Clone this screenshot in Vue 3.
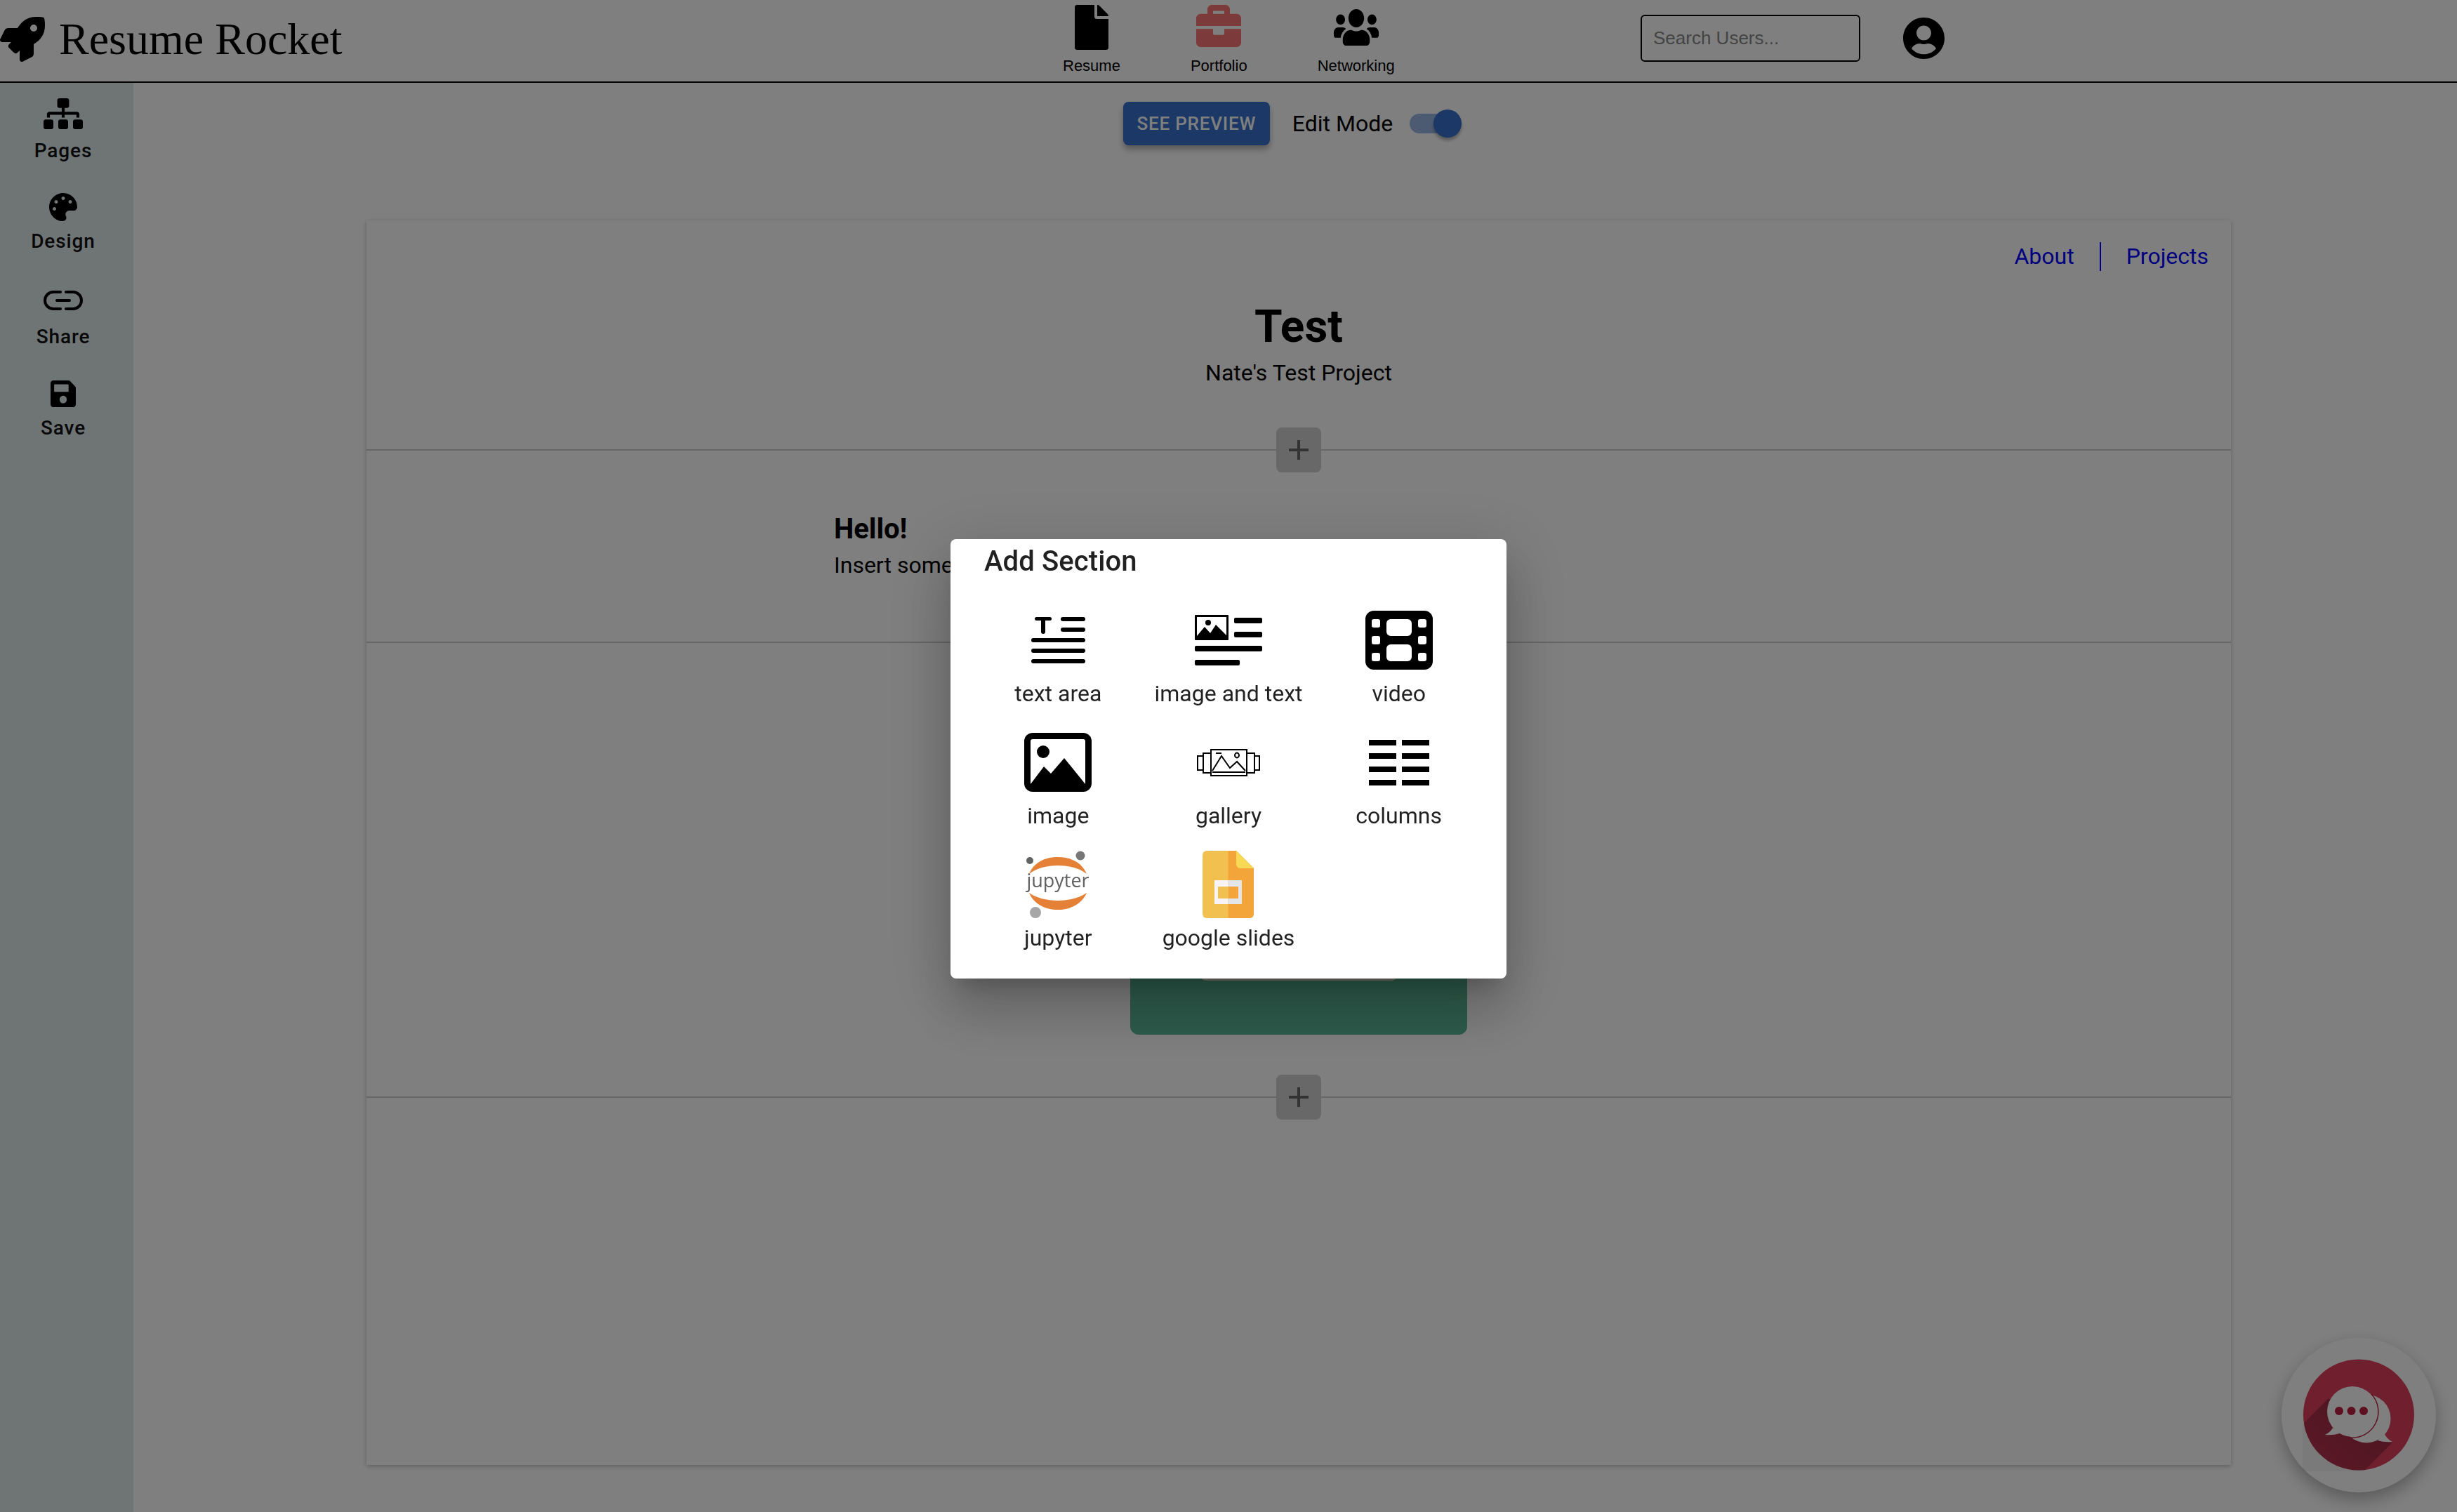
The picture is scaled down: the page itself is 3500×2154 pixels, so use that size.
<template>
  <div class="page">
    <header class="topbar">
      <div class="brand">
        <svg class="rocket" width="64" height="64" viewBox="0 0 512 512" aria-hidden="true">
          <path d="M505.05 19.1a15.89 15.89 0 0 0-12.2-12.2C460.65 0 435.46 0 410.36 0c-103.2 0-165.1 55.2-211.29 128H94.87A48 48 0 0 0 52 154.49l-49.42 98.8A24 24 0 0 0 24.07 288h103.77l-22.47 22.47a32 32 0 0 0 0 45.25l50.9 50.91a32 32 0 0 0 45.26 0L224 384.16V488a24 24 0 0 0 34.7 21.49l98.7-49.39a47.91 47.91 0 0 0 26.5-42.9V312.79c72.59-46.3 128-108.4 128-211.09.1-25.2.1-50.4-6.85-82.6zM384 168a40 40 0 1 1 40-40 40 40 0 0 1-40 40z" />
        </svg>
        <span class="brand-name">Resume Rocket</span>
      </div>
      <nav class="top-nav">
        <a class="top-link">
          <svg width="48" height="64" viewBox="0 0 384 512" aria-hidden="true">
            <path d="M224 136V0H24C10.7 0 0 10.7 0 24v464c0 13.3 10.7 24 24 24h336c13.3 0 24-10.7 24-24V160H248c-13.2 0-24-10.8-24-24zm160-14.1v6.1H256V0h6.1c6.4 0 12.5 2.5 17 7l97.9 98c4.5 4.5 7 10.6 7 16.9z" />
          </svg>
          <span>Resume</span>
        </a>
        <a class="top-link">
          <svg class="case" width="64" height="60" viewBox="0 32 512 448" preserveAspectRatio="none" aria-hidden="true">
            <path d="M320 336c0 8.84-7.16 16-16 16h-96c-8.84 0-16-7.16-16-16v-48H0v144c0 25.6 22.4 48 48 48h416c25.6 0 48-22.4 48-48V288H320v48zm144-208h-80V80c0-25.6-22.4-48-48-48H176c-25.6 0-48 22.4-48 48v48H48c-25.6 0-48 22.4-48 48v80h512v-80c0-25.6-22.4-48-48-48zm-144 0H192V96h128v32z" />
          </svg>
          <span>Portfolio</span>
        </a>
        <a class="top-link">
          <svg class="people" width="64" height="52" viewBox="0 32 640 448" preserveAspectRatio="none" aria-hidden="true">
            <path d="M96 224c35.3 0 64-28.7 64-64s-28.7-64-64-64-64 28.7-64 64 28.7 64 64 64zm448 0c35.3 0 64-28.7 64-64s-28.7-64-64-64-64 28.7-64 64 28.7 64 64 64zm32 32h-64c-17.6 0-33.5 7.1-45.1 18.6 40.3 22.1 68.9 62 75.1 109.4h66c17.7 0 32-14.3 32-32v-32c0-35.3-28.7-64-64-64zm-256 0c61.9 0 112-50.1 112-112S381.9 32 320 32 208 82.1 208 144s50.1 112 112 112zm76.8 32h-8.3c-20.8 10-43.9 16-68.5 16s-47.6-6-68.5-16h-8.3C179.6 288 128 339.6 128 403.2V432c0 26.5 21.5 48 48 48h288c26.5 0 48-21.5 48-48v-28.8c0-63.6-51.6-115.2-115.2-115.2zm-223.7-13.4C161.5 263.1 145.6 256 128 256H64c-35.3 0-64 28.7-64 64v32c0 17.7 14.3 32 32 32h65.9c6.3-47.4 34.9-87.3 75.2-109.4z" />
          </svg>
          <span>Networking</span>
        </a>
      </nav>
      <input class="search" type="text" placeholder="Search Users..." />
      <svg class="avatar" width="59" height="59" viewBox="0 8 496 496" aria-hidden="true">
        <path d="M248 8C111 8 0 119 0 256s111 248 248 248 248-111 248-248S385 8 248 8zm0 96c48.6 0 88 39.4 88 88s-39.4 88-88 88-88-39.4-88-88 39.4-88 88-88zm0 344c-58.7 0-111.3-26.6-146.5-68.2 18.8-35.4 55.6-59.8 98.5-59.8 2.4 0 4.8.4 7.1 1.1 13 4.2 26.6 6.9 40.9 6.9 14.3 0 28-2.7 40.9-6.9 2.3-.7 4.7-1.1 7.1-1.1 42.9 0 79.7 24.4 98.5 59.8C359.3 421.4 306.7 448 248 448z" />
      </svg>
    </header>

    <div class="body-row">
      <aside class="sidebar">
        <div v-for="item in sideItems" :key="item.label" class="side-item">
          <div class="side-icon">
            <svg v-if="item.label === 'Pages'" width="56" height="44" viewBox="0 0 640 512" preserveAspectRatio="none" aria-hidden="true">
              <path d="M128 352H32c-17.67 0-32 14.33-32 32v96c0 17.67 14.33 32 32 32h96c17.67 0 32-14.33 32-32v-96c0-17.67-14.33-32-32-32zm-24-80h192v48h48v-48h192v48h48v-57.59c0-21.17-17.23-38.41-38.41-38.41H344v-64h40c17.67 0 32-14.33 32-32V32c0-17.67-14.33-32-32-32H256c-17.67 0-32 14.33-32 32v96c0 17.67 14.33 32 32 32h40v64H94.41C73.23 224 56 241.23 56 262.41V320h48v-48zm264 80h-96c-17.67 0-32 14.33-32 32v96c0 17.67 14.33 32 32 32h96c17.67 0 32-14.33 32-32v-96c0-17.67-14.33-32-32-32zm240 0h-96c-17.67 0-32 14.33-32 32v96c0 17.67 14.33 32 32 32h96c17.67 0 32-14.33 32-32v-96c0-17.67-14.33-32-32-32z" />
            </svg>
            <svg v-else-if="item.label === 'Design'" width="40" height="40" viewBox="0 0 512 512" aria-hidden="true">
              <path d="M204.3 5C104.9 24.4 24.8 104.3 5.2 203.4c-37 187 131.7 326.4 258.8 306.7 41.2-6.4 61.4-54.6 42.5-91.7-23.1-45.4 9.9-98.4 60.9-98.4h79.7c35.8 0 64.8-29.6 64.9-65.3C511.5 97.1 368.1-26.9 204.3 5zM96 320c-17.7 0-32-14.3-32-32s14.3-32 32-32 32 14.3 32 32-14.3 32-32 32zm32-128c-17.7 0-32-14.3-32-32s14.3-32 32-32 32 14.3 32 32-14.3 32-32 32zm128-64c-17.7 0-32-14.3-32-32s14.3-32 32-32 32 14.3 32 32-14.3 32-32 32zm128 64c-17.7 0-32-14.3-32-32s14.3-32 32-32 32 14.3 32 32-14.3 32-32 32z" />
            </svg>
            <svg v-else-if="item.label === 'Share'" width="56" height="28" viewBox="0 0 56 28" fill="none" stroke="#000" stroke-width="4" stroke-linecap="round" aria-hidden="true">
              <path d="M24 2H14a12 12 0 0 0 0 24h10" />
              <path d="M32 2h10a12 12 0 0 1 0 24H32" />
              <path d="M19 14h18" />
            </svg>
            <svg v-else width="36" height="38" viewBox="0 32 448 448" preserveAspectRatio="none" aria-hidden="true">
              <path d="M433.941 129.941l-83.882-83.882A48 48 0 0 0 316.118 32H48C21.49 32 0 53.49 0 80v352c0 26.51 21.49 48 48 48h352c26.51 0 48-21.49 48-48V163.882a48 48 0 0 0-14.059-33.941zM224 416c-35.346 0-64-28.654-64-64 0-35.346 28.654-64 64-64s64 28.654 64 64c0 35.346-28.654 64-64 64zm96-304.52V212c0 6.627-5.373 12-12 12H76c-6.627 0-12-5.373-12-12V108c0-6.627 5.373-12 12-12h228.52c3.183 0 6.235 1.264 8.485 3.515l3.48 3.48A11.996 11.996 0 0 1 320 111.48z" />
            </svg>
          </div>
          <span class="side-label" :style="{ marginTop: item.gap + 'px' }">{{ item.label }}</span>
        </div>
      </aside>

      <main class="main">
        <div class="controls">
          <button type="button" class="preview-btn">See Preview</button>
          <span class="edit-label">Edit Mode</span>
          <div class="switch">
            <div class="switch-track"></div>
            <div class="switch-thumb"></div>
          </div>
        </div>

        <div class="card">
          <section class="section section-head">
            <div class="page-links">
              <a class="page-link">About</a>
              <a class="page-link page-link-split">Projects</a>
            </div>
            <h1 class="title">Test</h1>
            <p class="subtitle">Nate's Test Project</p>
            <button type="button" class="add-btn" aria-label="Add section"><span class="plus"></span></button>
          </section>
          <section class="section section-text">
            <h2 class="hello">Hello!</h2>
            <p class="insert">Insert some text</p>
          </section>
          <section class="section section-media">
            <div class="green-block">
              <div class="green-inner"></div>
            </div>
            <button type="button" class="add-btn" aria-label="Add section"><span class="plus"></span></button>
          </section>
          <section class="section section-empty"></section>
        </div>
      </main>
    </div>

    <div class="chat-widget">
      <svg width="220" height="220" viewBox="0 0 220 220" aria-hidden="true">
        <defs>
          <clipPath id="chat-circle"><circle cx="110" cy="109.5" r="79" /></clipPath>
          <clipPath id="chat-square"><rect x="30" y="30" width="160" height="160" /></clipPath>
          <linearGradient id="chat-shade" x1="1" y1="0" x2="0" y2="1">
            <stop offset="0" stop-color="#000" stop-opacity="0.34" />
            <stop offset="1" stop-color="#000" stop-opacity="0.08" />
          </linearGradient>
        </defs>
        <polygon points="67,86 158,149 58,249 -33,186" fill="#000" opacity="0.04" clip-path="url(#chat-square)" />
        <circle cx="110" cy="109.5" r="79" fill="#e03e5e" />
        <polygon points="67,86 158,149 58,249 -33,186" fill="url(#chat-shade)" clip-path="url(#chat-circle)" />
        <circle cx="121" cy="115" r="34.5" fill="#fff" />
        <path d="M147 137 Q150 144 158 148 Q146 149 137 146z" fill="#fff" />
        <circle cx="101" cy="105" r="36" fill="#fff" />
        <path d="M73 128 Q70 134 62 138 Q74 139 83 136z" fill="#fff" />
        <path d="M128 80A37 37 0 0 1 97 142" fill="none" stroke="#bd2040" stroke-width="1.5" />
        <circle cx="82" cy="104" r="6" fill="#bd2040" />
        <circle cx="99.5" cy="104" r="6" fill="#bd2040" />
        <circle cx="117" cy="104" r="6" fill="#bd2040" />
      </svg>
    </div>

    <div class="overlay">
      <div class="dialog">
        <h3 class="dialog-title">Add Section</h3>
        <div class="options">
          <div class="option">
            <div class="option-icon">
              <svg width="77" height="67" viewBox="0 0 77 67" aria-hidden="true">
                <rect x="5" y="0" width="24" height="5" rx="2.5" />
                <rect x="14" y="0" width="6" height="24" rx="3" />
                <rect x="42" y="0" width="35" height="6" rx="3" />
                <rect x="42" y="15" width="35" height="6" rx="3" />
                <rect x="0" y="30" width="77" height="6" rx="3" />
                <rect x="0" y="45" width="77" height="6" rx="3" />
                <rect x="0" y="60" width="77" height="6" rx="3" />
              </svg>
            </div>
            <span class="option-label">text area</span>
          </div>
          <div class="option">
            <div class="option-icon">
              <svg width="96" height="72" viewBox="0 0 96 72" aria-hidden="true">
                <rect x="0" y="0" width="48" height="36" rx="1" />
                <rect x="3" y="3" width="42" height="28" fill="#fff" />
                <circle cx="19" cy="11" r="4" />
                <path d="M3 30 14 17l8 9 8-12 15 15v3H3z" />
                <rect x="56" y="4" width="40" height="8" rx="2" />
                <rect x="56" y="24" width="40" height="8" rx="2" />
                <rect x="0" y="44" width="96" height="8" rx="2" />
                <rect x="0" y="64" width="64" height="8" rx="2" />
              </svg>
            </div>
            <span class="option-label">image and text</span>
          </div>
          <div class="option">
            <div class="option-icon">
              <svg width="96" height="84" viewBox="0 0 96 84" aria-hidden="true">
                <path fill-rule="evenodd" d="M12 0H84A12 12 0 0 1 96 12V72A12 12 0 0 1 84 84H12A12 12 0 0 1 0 72V12A12 12 0 0 1 12 0zM12 12a3 3 0 0 0-3 3v6a3 3 0 0 0 3 3h6a3 3 0 0 0 3-3v-6a3 3 0 0 0-3-3zM12 36a3 3 0 0 0-3 3v6a3 3 0 0 0 3 3h6a3 3 0 0 0 3-3v-6a3 3 0 0 0-3-3zM12 60a3 3 0 0 0-3 3v6a3 3 0 0 0 3 3h6a3 3 0 0 0 3-3v-6a3 3 0 0 0-3-3zM78 12a3 3 0 0 0-3 3v6a3 3 0 0 0 3 3h6a3 3 0 0 0 3-3v-6a3 3 0 0 0-3-3zM78 36a3 3 0 0 0-3 3v6a3 3 0 0 0 3 3h6a3 3 0 0 0 3-3v-6a3 3 0 0 0-3-3zM78 60a3 3 0 0 0-3 3v6a3 3 0 0 0 3 3h6a3 3 0 0 0 3-3v-6a3 3 0 0 0-3-3zM36 12a6 6 0 0 0-6 6v12a6 6 0 0 0 6 6h24a6 6 0 0 0 6-6V18a6 6 0 0 0-6-6zM36 48a6 6 0 0 0-6 6v12a6 6 0 0 0 6 6h24a6 6 0 0 0 6-6V54a6 6 0 0 0-6-6z" />
              </svg>
            </div>
            <span class="option-label">video</span>
          </div>
          <div class="option">
            <div class="option-icon">
              <svg width="96" height="84" viewBox="0 0 96 84" aria-hidden="true">
                <rect width="96" height="84" rx="12" />
                <rect x="9" y="9" width="78" height="66" rx="3" fill="#fff" />
                <ellipse cx="27" cy="27" rx="9" ry="9" />
                <path d="M9 73 28 48l10 10 19-22 30 37v2H9z" />
              </svg>
            </div>
            <span class="option-label">image</span>
          </div>
          <div class="option">
            <div class="option-icon">
              <svg width="90" height="39" viewBox="0 0 90 39" fill="none" stroke="#000" stroke-width="2" aria-hidden="true">
                <rect x="20" y="1" width="51" height="37" />
                <rect x="9" y="6" width="11" height="28" />
                <rect x="71" y="6" width="11" height="28" />
                <rect x="1" y="10" width="8" height="20" />
                <rect x="82" y="10" width="7" height="20" />
                <path d="M22 31 35 10l12 17 10-9 12 13" />
                <path d="M22 33h47" />
                <ellipse cx="57" cy="9" rx="3" ry="3.4" />
                <path d="M27 6h8" />
              </svg>
            </div>
            <span class="option-label">gallery</span>
          </div>
          <div class="option">
            <div class="option-icon">
              <svg width="86" height="65" viewBox="0 0 86 65" aria-hidden="true">
                <rect x="0" y="0" width="39" height="8" />
                <rect x="47" y="0" width="39" height="8" />
                <rect x="0" y="19" width="39" height="8" />
                <rect x="47" y="19" width="39" height="8" />
                <rect x="0" y="38" width="39" height="8" />
                <rect x="47" y="38" width="39" height="8" />
                <rect x="0" y="57" width="39" height="8" />
                <rect x="47" y="57" width="39" height="8" />
              </svg>
            </div>
            <span class="option-label">columns</span>
          </div>
          <div class="option">
            <div class="option-icon">
              <svg width="92" height="96" viewBox="0 0 92 96" aria-hidden="true">
                <path d="M5 33C12 16 28 9 46 9S80 16 87 33C77 25 62 21 46 21S15 25 5 33z" fill="#e58136" />
                <path d="M5 60C12 76 28 84 46 84S80 76 87 60C77 67 62 71 46 71S15 67 5 60z" fill="#e58136" />
                <text x="46" y="52" text-anchor="middle" class="jupyter-word">jupyter</text>
                <circle cx="78" cy="7" r="6.5" fill="#767677" />
                <circle cx="6" cy="14" r="5" fill="#616262" />
                <circle cx="14" cy="88" r="8" fill="#a6a6a6" />
              </svg>
            </div>
            <span class="option-label">jupyter</span>
          </div>
          <div class="option">
            <div class="option-icon">
              <svg width="73" height="96" viewBox="0 0 73 96" aria-hidden="true">
                <path d="M6 0H48L73 25V90a6 6 0 0 1-6 6H6a6 6 0 0 1-6-6V6a6 6 0 0 1 6-6z" fill="#f2c04e" />
                <path d="M36.5 0H48L73 25V90a6 6 0 0 1-6 6H36.5z" fill="#f3a53a" />
                <path d="M48 0 73 25H54a6 6 0 0 1-6-6z" fill="#f7d955" />
                <rect x="17" y="42" width="19.5" height="34" fill="#f8f4f6" />
                <rect x="36.5" y="42" width="19.5" height="34" fill="#e3e5e8" />
                <rect x="22" y="51" width="14.5" height="17" fill="#f2c04e" />
                <rect x="36.5" y="51" width="14.5" height="17" fill="#f3a53a" />
              </svg>
            </div>
            <span class="option-label">google slides</span>
          </div>
        </div>
      </div>
    </div>
  </div>
</template>

<script setup>
const sideItems = [
  { label: 'Pages', gap: 15 },
  { label: 'Design', gap: 11 },
  { label: 'Share', gap: 14 },
  { label: 'Save', gap: 11 }
]
</script>

<style>
body {
  margin: 0;
  background: #fff;
}
</style>

<style scoped>
.page {
  height: 100vh;
  overflow: hidden;
  display: flex;
  flex-direction: column;
  font-family: Roboto, sans-serif;
  color: #000;
}

.topbar {
  display: flex;
  align-items: flex-start;
  height: 116px;
  flex-shrink: 0;
  border-bottom: 2px solid #000;
  box-sizing: content-box;
}

.brand {
  display: flex;
  align-items: center;
  gap: 20px;
  width: 1514px;
  height: 112px;
}

.brand-name {
  font-family: "Liberation Serif", serif;
  font-size: 64px;
  line-height: 1;
}

.top-nav {
  display: flex;
  gap: 100px;
  width: 823px;
  padding-top: 7px;
  flex-shrink: 0;
}

.top-link {
  display: flex;
  flex-direction: column;
  align-items: center;
  font-family: "Liberation Sans", sans-serif;
  font-size: 22px;
  line-height: 28px;
}

.top-link svg {
  height: 64px;
  margin-bottom: 9px;
}

.top-link .case {
  height: 60px;
  margin-bottom: 13px;
  fill: #f87474;
}

.top-link .people {
  height: 52px;
  margin-top: 6px;
  margin-bottom: 15px;
}

.search {
  width: 313px;
  height: 67px;
  margin-top: 21px;
  padding: 0 16px;
  box-sizing: border-box;
  border: 2px solid #000;
  border-radius: 6px;
  background: transparent;
  font-family: "Liberation Sans", sans-serif;
  font-size: 26px;
  outline: none;
}

.search::placeholder {
  color: #888;
  opacity: 1;
}

.avatar {
  margin-top: 25px;
  margin-left: 61px;
}

.body-row {
  flex: 1;
  display: flex;
  min-height: 0;
}

.sidebar {
  width: 190px;
  flex-shrink: 0;
  padding: 22px 10px 0 0;
  box-sizing: border-box;
  background: #dee8ea;
}

.side-item {
  height: 133px;
  display: flex;
  flex-direction: column;
  align-items: center;
}

.side-icon {
  height: 44px;
  display: flex;
  align-items: center;
}

.side-label {
  font-size: 28px;
  line-height: 32px;
  font-weight: 500;
  letter-spacing: 0.9px;
  color: #111;
}

.main {
  flex: 1;
  min-width: 0;
  padding-top: 27px;
}

.controls {
  display: flex;
  align-items: center;
  justify-content: center;
  height: 62px;
  padding-right: 8px;
  margin-bottom: 107px;
}

.preview-btn {
  width: 209px;
  height: 62px;
  padding: 0;
  border: none;
  border-radius: 8px;
  background: #3670cc;
  color: #fff;
  font-family: Roboto, sans-serif;
  font-size: 26px;
  font-weight: 500;
  letter-spacing: 0.8px;
  text-transform: uppercase;
  box-shadow: 0 6px 8px rgba(0, 0, 0, 0.3);
}

.edit-label {
  margin-left: 32px;
  font-size: 32px;
  line-height: 40px;
}

.switch {
  position: relative;
  width: 74px;
  height: 40px;
  margin-left: 24px;
}

.switch-track {
  position: absolute;
  left: 0;
  top: 6px;
  width: 58px;
  height: 28px;
  border-radius: 14px;
  background: #3670cc;
  opacity: 0.5;
}

.switch-thumb {
  position: absolute;
  right: 0;
  top: 0;
  width: 40px;
  height: 40px;
  border-radius: 50%;
  background: #3670cc;
  box-shadow: 0 4px 4px rgba(0, 0, 0, 0.3);
}

.card {
  margin: 0 322px 0 332px;
  height: 1773px;
  display: flex;
  flex-direction: column;
  background: #fff;
  box-shadow: 0 2px 6px rgba(0, 0, 0, 0.25);
}

.section {
  position: relative;
  flex-shrink: 0;
  box-sizing: border-box;
  border-bottom: 2px solid #ccc;
}

.section-head {
  height: 328px;
  padding-top: 31px;
  text-align: center;
}

.page-links {
  display: flex;
  justify-content: flex-end;
  height: 41px;
  padding-right: 32px;
  font-size: 32px;
  line-height: 41px;
}

.page-link {
  padding: 0 36px;
  color: #0000ff;
}

.page-link:last-child {
  padding-right: 0;
}

.page-link-split {
  border-left: 2px solid #0000ff;
}

.title {
  margin: 42px 0 3px;
  font-size: 64px;
  line-height: 76px;
  font-weight: 700;
}

.subtitle {
  margin: 0;
  font-size: 32px;
  line-height: 48px;
}

.add-btn {
  position: absolute;
  left: 50%;
  bottom: -33px;
  width: 64px;
  height: 64px;
  margin-left: -32px;
  padding: 0;
  border: none;
  border-radius: 8px;
  background: #d0d0d0;
  display: flex;
  align-items: center;
  justify-content: center;
}

.plus {
  position: relative;
  width: 28px;
  height: 28px;
  background:
    linear-gradient(#666, #666) center / 28px 4px no-repeat,
    linear-gradient(#666, #666) center / 4px 28px no-repeat;
}

.section-text {
  height: 274px;
  padding: 86px 0 0 666px;
}

.hello {
  margin: 0 0 1px;
  font-size: 40px;
  line-height: 52px;
  font-weight: 700;
}

.insert {
  margin: 0;
  font-size: 32px;
  line-height: 48px;
}

.section-media {
  height: 648px;
  padding-top: 86px;
}

.green-block {
  width: 480px;
  height: 472px;
  margin: 0 auto;
  box-sizing: border-box;
  padding-bottom: 77px;
  display: flex;
  justify-content: center;
  align-items: flex-end;
  border-radius: 12px;
  background: #5cb898;
}

.green-inner {
  width: 280px;
  height: 200px;
  border-radius: 8px;
  background: #ebe9d4;
}

.section-empty {
  flex: 1;
  border-bottom: none;
}

.chat-widget {
  position: fixed;
  right: 30px;
  bottom: 28px;
  width: 220px;
  height: 220px;
  border-radius: 50%;
  background: #fff;
  box-shadow: 0 10px 24px rgba(0, 0, 0, 0.3);
}

.chat-widget svg {
  display: block;
}

.overlay {
  position: fixed;
  inset: 0;
  padding-top: 8px;
  box-sizing: border-box;
  display: flex;
  align-items: center;
  justify-content: center;
  background: rgba(0, 0, 0, 0.5);
}

.dialog {
  width: 792px;
  box-sizing: border-box;
  padding: 1px 32px 33px;
  border-radius: 8px;
  background: #fff;
  color: rgba(0, 0, 0, 0.87);
  box-shadow:
    0 22px 30px -14px rgba(0, 0, 0, 0.2),
    0 48px 76px 6px rgba(0, 0, 0, 0.14),
    0 18px 92px 16px rgba(0, 0, 0, 0.12);
}

.dialog-title {
  margin: 0 0 33px 16px;
  font-size: 40px;
  line-height: 62px;
  font-weight: 500;
  letter-spacing: 0.1px;
}

.options {
  display: grid;
  grid-template-columns: repeat(3, 1fr);
  row-gap: 25px;
}

.option {
  display: flex;
  flex-direction: column;
  align-items: center;
}

.option-icon {
  height: 96px;
  margin-bottom: 3px;
  display: flex;
  align-items: center;
  justify-content: center;
}

.option-label {
  font-size: 32px;
  line-height: 50px;
}

.jupyter-word {
  font-family: "Open Sans", sans-serif;
  font-size: 27px;
  fill: #616161;
}
</style>
